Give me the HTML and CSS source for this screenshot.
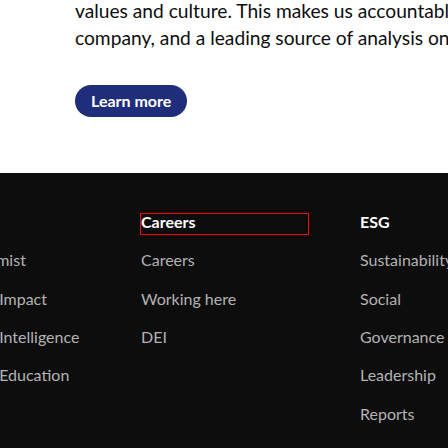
FILE: index.html
```html
<!DOCTYPE html>
<html lang="en">
<head>
<meta charset="utf-8">
<link rel="stylesheet" href="styles.css">
</head>
<body>
<section class="intro">
  <p class="intro-text">
    <span class="line">values and culture. This makes us accountable to our readers</span>
    <span class="line">company, and a leading source of analysis on international business</span>
  </p>
  <a class="btn" href="#">Learn more</a>
</section>
<footer class="footer">
  <div class="cols">
    <div class="col">
      <h3 class="col-head">Brands</h3>
      <ul class="links">
        <li>The Economist</li>
        <li>Economist Impact</li>
        <li>Economist Intelligence</li>
        <li>Economist Education</li>
      </ul>
    </div>
    <div class="col">
      <h3 class="col-head col-head-focus">Careers</h3>
      <ul class="links">
        <li>Careers</li>
        <li>Working here</li>
        <li>DEI</li>
      </ul>
    </div>
    <div class="col">
      <h3 class="col-head">ESG</h3>
      <ul class="links">
        <li>Sustainability</li>
        <li>Social</li>
        <li>Governance</li>
        <li>Leadership</li>
        <li>Reports</li>
      </ul>
    </div>
  </div>
</footer>
</body>
</html>
```

FILE: styles.css
```css
html, body {
  margin: 0;
  padding: 0;
}
body {
  width: 448px;
  height: 448px;
  overflow: hidden;
  background: #ffffff;
  font-family: "Lato", "Noto Sans", sans-serif;
  color: #0d0d0d;
}
.intro {
  height: 173px;
  padding-left: 75px;
  display: flex;
  flex-direction: column;
  align-items: flex-start;
}
.intro-text {
  margin: -3px 0 0 0;
  font-size: 19.2px;
  line-height: 27px;
  font-weight: 400;
  letter-spacing: 0;
  white-space: nowrap;
  overflow: hidden;
  width: 373px;
}
.line {
  display: block;
}
.btn {
  margin-top: 34px;
  display: inline-block;
  background: #1f2e7a;
  color: #ffffff;
  font-weight: 700;
  font-size: 16px;
  line-height: 32px;
  height: 32px;
  padding: 0 16px;
  border-radius: 16px;
  text-decoration: none;
}
.footer {
  background: #0d0d0d;
  height: 275px;
  padding-top: 41px;
  box-sizing: border-box;
}
.cols {
  margin-left: -78px;
  display: grid;
  grid-template-columns: 219px 219px 219px;
}
.col-head {
  margin: 0 0 7px 0;
  width: 167px;
  height: 20px;
  font-size: 16px;
  line-height: 16px;
  font-weight: 700;
  color: #ffffff;
  white-space: nowrap;
}
.col-head-focus {
  outline: 1px solid #ff0000;
  outline-offset: 0;
}
.links {
  list-style: none;
  margin: 0;
  padding: 0;
}
.links li {
  font-size: 16px;
  line-height: 22px;
  padding: 8.2px 0;
  color: #b3b3b3;
  white-space: nowrap;
}
```
